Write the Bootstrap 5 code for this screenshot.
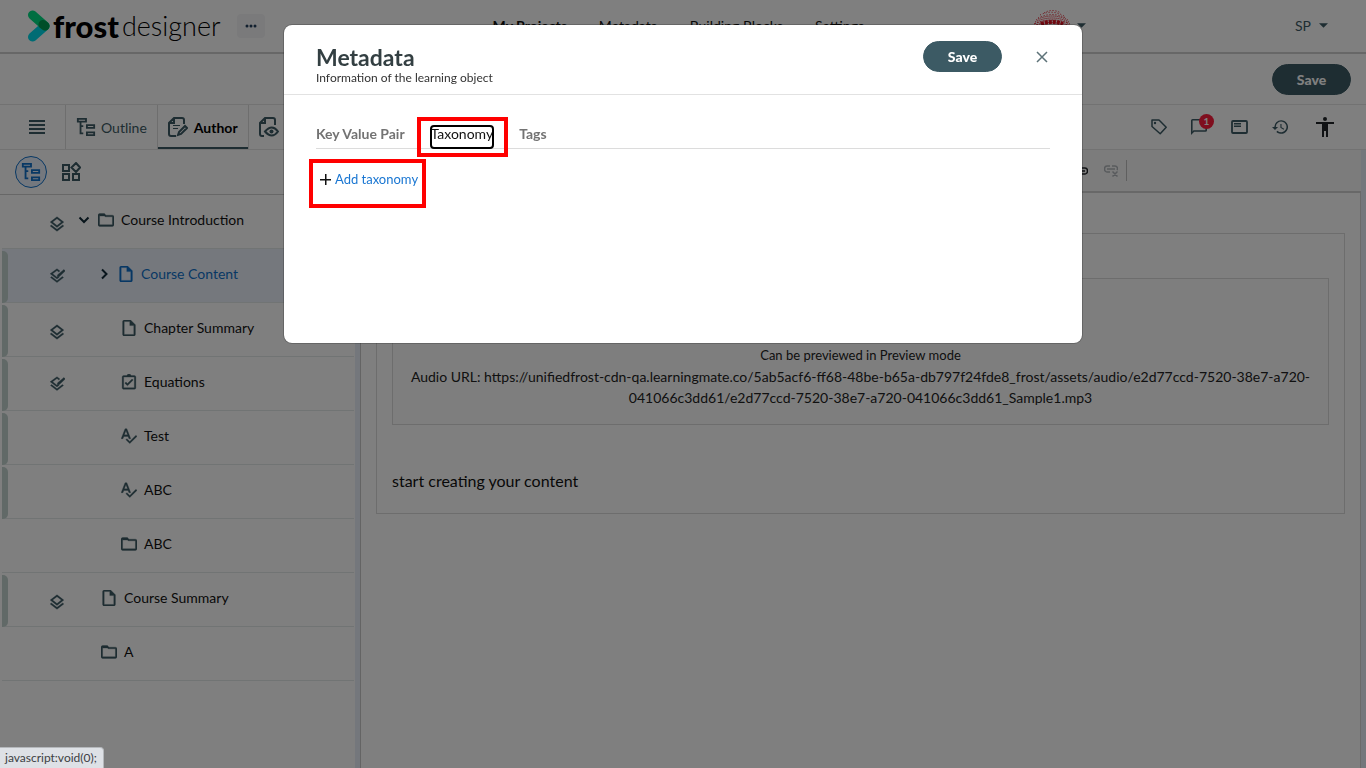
<!DOCTYPE html>
<html lang="en">
<head>
<meta charset="utf-8">
<meta name="viewport" content="width=device-width, initial-scale=1">
<title>Frost Designer - Metadata</title>
<link rel="stylesheet" href="https://cdn.jsdelivr.net/npm/bootstrap@5.3.0/dist/css/bootstrap.min.css">
<style>
  :root { --teal: #3c5a64; --line: #e4e4e4; --blue: #1070c9; }
  body { font-family: Lato, "Open Sans", sans-serif; font-size: 14px; line-height: 21px; color: #111; overflow: hidden; }
  svg { display: block; fill: currentColor; flex: none; }
  a { text-decoration: none; color: inherit; }
  .i16 { width: 16px; height: 16px; }
  .i20 { width: 20px; height: 20px; } .i24 { width: 24px; height: 24px; }
  .plain-btn { border: 0; background: none; padding: 0; color: var(--teal); }
  .shell { min-height: 100vh; }
  .top-bar { height: 54px; border-bottom: 2px solid #cfcfcf; padding: 0 38px 1px 28px; }
  .brand { color: #000; line-height: 36px; white-space: nowrap; gap: 3px; }
  .brand-bold { font-weight: 900; font-size: 31px; }
  .brand-light { font-weight: 300; font-size: 27px; }
  .more-btn { width: 28px; height: 24px; background: #f4f4f6; border-radius: 4px; color: #24405e; margin-left: 16px; }
  .main-nav { gap: 32px; margin-left: 228px; }
  .account { margin-left: 209px; gap: 8px; }
  .action-bar { height: 51px; border-bottom: 1px solid var(--line); padding-right: 15px; }
  .save-btn { width: 79px; height: 31px; padding: 0; border-radius: 16px; font-size: 14px; font-weight: 900; line-height: 21px; --bs-btn-bg: #3c5a64; --bs-btn-border-color: #3c5a64; --bs-btn-color: #fff; --bs-btn-hover-bg: #2e4850; --bs-btn-hover-color: #fff; }
  .tab-bar { height: 45px; border-bottom: 1px solid var(--line); color: var(--teal); padding-right: 28px; }
  .menu-cell { width: 66px; border-right: 1px solid #dcdcdc; padding-left: 9px; }
  .mode-tab { padding: 0 10px; gap: 5px; border-right: 1px solid #dcdcdc; }
  .mode-tab.current { color: #000; font-weight: 700; gap: 6px; box-shadow: inset 0 -2px #3c5a64; }
  .mode-tab svg { color: var(--teal); }
  .count-badge { width: 15px; height: 15px; border-radius: 50%; background: #ff1c3c; color: #fff; font-size: 10px; line-height: 15px; left: 8px; top: -5px; text-align: center; font-weight: 700; }
  .side { width: 361px; border-right: 1px solid #c8c8c8; box-shadow: inset -5px 0 #e8eff8; flex: none; padding-right: 5px; }
  .side-tools { height: 45px; border-bottom: 1px solid #cfcfcf; padding-left: 15px; gap: 14px; }
  .round-btn { width: 32px; height: 32px; border: 1px solid var(--blue); border-radius: 50%; color: var(--blue); background: #e8f0fc; }
  .tree { margin: 0 1px 0 2px; padding: 0; list-style: none; }
  .tree svg { stroke: currentColor; stroke-width: .4px; }
  .tree-row { height: 54px; border-bottom: 1px solid #e2e9e9; padding-bottom: 4px; }
  .edge { width: 6px; height: 52px; border-radius: 0 5px 5px 0; margin-bottom: -6px; }
  .edge.on { background: #c3d3cf; }
  .state-slot { width: 16px; height: 16px; margin: 5px 13px 0 41px; color: var(--teal); }
  .state-base { margin-top: 9px; }
  .level-2 { padding-left: 20px; }
  .chev { width: 20px; color: #122b38; } .chev-none { width: 23px; }
  .node-icon { margin-right: 7px; color: var(--teal); }
  .tree-row.picked { background: #eaf0fb; color: var(--blue); }
  .tree-row.picked .node-icon { color: var(--blue); }
  .editor { box-shadow: inset -5px 0 #e8eff8; padding-right: 5px; min-width: 0; }
  .format-bar { height: 43px; background: #f8f8f8; border-bottom: 2px solid #d0d0d0; padding-right: 234px; }
  .paper { border-right: 1px solid #d4d4d4; padding: 40px 15px 0; }
  .block-outer { border: 1px solid #dadada; padding: 44px 15px 20px; }
  .block-audio { border: 1px solid #dadada; background: #fdfdfd; padding: 16px; color: #222; }
  .audio-icon { height: 50px; }
  .hint { font-size: 13px; }
  .lead-in { font-size: 16px; line-height: 24px; margin-top: 44px; }
  .modal-dialog { max-width: 800px; margin: 24px auto; }
  .modal-content { height: 320px; border-radius: 9px; border-color: rgba(0,0,0,.2); background-clip: padding-box; }
  .modal-header { height: 70px; padding: 6px 33px 0 32px; border-color: #e2e2e2; }
  .modal-title { font-size: 23px; line-height: 28px; font-weight: 700; color: #333f42; margin-top: 2px; }
  .sub-title { font-size: 12px; line-height: 14px; color: #333; }
  .close-btn { margin-left: 33px; color: #5d7278; }
  .modal-body { padding: 28px 32px 0; }
  .meta-tabs { height: 26px; gap: 26px; border-bottom: 1px solid #dcdcdc; color: #737373; font-weight: 700; }
  .focus-tab { color: #111; outline: 2px solid #000; outline-offset: -1px; border-radius: 3px; height: 22px; font-weight: 400; margin-top: 3px; line-height: 16px; }
  .add-row { margin: 20px 0 0 4px; gap: 4px; color: #111; }
  .add-row a { color: #1976d2; font-size: 13px; }
  .callout { border: 4px solid #f00; pointer-events: none; }
  .callout-tab { inset: -6px -15px -9px -14px; }
  .callout-add { inset: -10px -8px -18px -11px; }
  .status-tip { z-index: 2000; background: #dee1e6; color: #3c4043; font-size: 12px; line-height: 20px; padding: 0 6px 0 5px; border: solid #b5b8bc; border-width: 1px 1px 0 0; border-radius: 0 4px 0 0; }
</style>
</head>
<body>
<svg class="d-none" aria-hidden="true">
  <symbol id="layers" viewBox="2 1 20 21"><path d="M12 18.5l-7.4-5.7L3 14.1l9 7 9-7-1.6-1.3zM12 16l7.4-5.7L21 9l-9-7-9 7 1.6 1.3zm0-11.5L17.7 9 12 13.5 6.3 9z"/></symbol>
  <symbol id="layers-edit" viewBox="1 1 22 22"><path d="M12 18.5l-7.4-5.7L3 14.1l9 7 9-7-1.6-1.3zM12 2L2.500 9l9.500 7 3-2.200-1.500-1.200-1.500 1L6 9l6-4.500 2.500 1.900L16 5zM21.500 3l2 2-8.500 8h-2.500v-2.500z"/></symbol>
  <symbol id="folder" viewBox="2 3 20 18"><path d="M9.200 6l2 2H20v10H4V6h5.200M10 4H4a2 2 0 0 0-2 2v12c0 1.100.9 2 2 2h16a2 2 0 0 0 2-2V8a2 2 0 0 0-2-2h-8z"/><path d="M4 5h6l2 2H4z"/></symbol>
  <symbol id="file" viewBox="2 2 20 20"><path d="M14 2H6a2 2 0 0 0-2 2v16c0 1.100.9 2 2 2h12a2 2 0 0 0 2-2V8zM6 20V4h7v5h5v11z"/></symbol>
  <symbol id="task" viewBox="2 1 20 21"><path d="M19 3h-4.200a3 3 0 0 0-5.600 0H5a2 2 0 0 0-2 2v14c0 1.100.9 2 2 2h14a2 2 0 0 0 2-2V5a2 2 0 0 0-2-2zm0 16H5V5h14zM17.500 9l-1.500-1.500-6 6-2-2L6.500 13l3.500 3.500z"/></symbol>
  <symbol id="spell" viewBox="2 2 21 21"><path d="M12.400 16h2.400L9.700 3H7.300L2.200 16h2.400l1.100-3h5.600zM6.400 11l2.100-5.500 2.100 5.500zM21.600 11.600l-8.100 8.100L9.800 16l-1.400 1.400 5.100 5.100L23 13z"/></symbol>
  <symbol id="outline" viewBox="0 0 22 22"><path fill="none" stroke="currentColor" stroke-width="2" d="M2 2h9v3H2zM12 9h8v3h-8zM12 17h8v3h-8zM5 6v12h3M5 10h3"/></symbol>
  <symbol id="down" viewBox="0 0 12 12"><path fill="none" stroke="currentColor" stroke-width="2" d="M1.500 3.500L6 8l4.500-4.500"/></symbol>
  <symbol id="right" viewBox="0 0 12 12"><path fill="none" stroke="currentColor" stroke-width="2" d="M4 1.500L8.500 6 4 10.500"/></symbol>
  <symbol id="caret" viewBox="0 0 10 5"><path d="M0 0h10L5 5z"/></symbol>
</svg>

<div class="shell d-flex flex-column">
  <header class="top-bar d-flex align-items-center">
    <a href="#" class="brand d-flex align-items-center" aria-label="frost designer">
      <svg width="22" height="32" viewBox="0 0 22 32"><g fill="none" stroke-width="9" stroke-linecap="round"><path stroke="#00d8e8" d="M4.500 27L17 16"/><path stroke="#00dc82" d="M4.500 5L17 16"/><path stroke="#009c50" d="M15 14.500L17 16"/></g></svg>
      <span class="brand-bold">frost</span><span class="brand-light">designer</span>
    </a>
    <button class="plain-btn more-btn d-flex align-items-center justify-content-center" aria-label="More"><svg width="12" height="4"><circle cx="2" cy="2" r="1.500"/><circle cx="6" cy="2" r="1.500"/><circle cx="10" cy="2" r="1.500"/></svg></button>
    <nav class="main-nav d-flex text-nowrap">
      <a href="#" class="fw-bold">My Projects</a><a href="#">Metadata</a><a href="#">Building Blocks</a><a href="#">Settings</a>
    </nav>
    <button class="plain-btn d-flex align-items-center gap-1 ms-auto" aria-label="Organisation">
      <svg width="42" height="32" viewBox="0 0 42 32"><g fill="none" stroke="#e01020"><path stroke-width="1" stroke-dasharray="1 2" d="M13 3q8-5 17 0M9 5q12-6 24 1M7 8q14-7 28 0"/><path stroke-width="1" stroke-dasharray="1 1" d="M5 10q16-8 32 0M4 12q17-8 34 0"/><path stroke-width="1" stroke-dasharray="2 1" d="M3 14q18-8 36 0M2 16q19-7 38 0"/><path stroke-width="4" stroke-dasharray="3 1" d="M10 14q11-4 22 0"/><path stroke-width="2" stroke-dasharray="1 1" d="M3 20h36M6 24h30"/></g></svg>
      <svg width="9" height="5"><use href="#caret"/></svg>
    </button>
    <button class="plain-btn account d-flex align-items-center"><span>SP</span><svg width="9" height="5"><use href="#caret"/></svg></button>
  </header>

  <div class="action-bar d-flex align-items-center justify-content-end"><button class="btn save-btn">Save</button></div>

  <div class="tab-bar d-flex">
    <button class="plain-btn menu-cell d-flex align-items-center justify-content-center" aria-label="Menu"><svg width="16" height="14" viewBox="0 0 16 14"><path d="M0 0h16v2H0zM0 4h16v2H0zM0 8h16v2H0zM0 12h16v2H0z"/></svg></button>
    <a href="#" class="mode-tab d-flex align-items-center"><svg class="i20"><use href="#outline"/></svg>Outline</a>
    <a href="#" class="mode-tab current d-flex align-items-center"><svg class="i20" viewBox="0 0 20 20"><g fill="none" stroke="currentColor" stroke-width="2"><path d="M8 19H3q-2 0-2-2V6l5-5h8q2 0 2 2v4M1 6h5V1M10 18l1-3 6-6 2 2-6 6z"/><path stroke-width="1" d="M5 8.500h7M5 11.500h5"/></g></svg>Author</a>
    <a href="#" class="mode-tab d-flex align-items-center" aria-label="Preview"><svg class="i20" viewBox="0 0 20 20"><g fill="none" stroke="currentColor" stroke-width="2"><path d="M5 19H3q-2 0-2-2V6l5-5h8q2 0 2 2v5M1 6h5V1"/><path d="M6 14.500q7-8 13 0-6 8-13 0z"/></g><circle cx="12.500" cy="14.500" r="2"/></svg></a>
    <div class="d-flex align-items-center ms-auto">
      <button class="plain-btn me-4" aria-label="Tags"><svg class="i16" viewBox="0 0 16 16"><path fill="none" stroke="currentColor" stroke-width="1.500" stroke-linejoin="round" d="M1 1h7l7.200 7.200-6 6.500L1 7.500z"/><circle cx="4" cy="4" r="1.200"/></svg></button>
      <button class="plain-btn position-relative me-4" aria-label="Comments"><svg class="i16" viewBox="2 2 20 20"><path d="M20 2H4a2 2 0 0 0-2 2v18l4-4h14a2 2 0 0 0 2-2V4a2 2 0 0 0-2-2zm0 14H5l-1 2V4h16z"/></svg><span class="count-badge position-absolute">1</span></button>
      <button class="plain-btn me-4" aria-label="Notes"><svg width="17" height="14" viewBox="0 0 17 14"><rect x="1" y="1" width="15" height="12" rx="1" fill="none" stroke="currentColor" stroke-width="1.800"/><path d="M3 3h7v1.500H3zM3 5.500h7V7H3z"/></svg></button>
      <button class="plain-btn" aria-label="History"><svg class="i16" viewBox="1 3 21 18"><path d="M13 3a9 9 0 0 0-9 9H1l3.900 3.900L9 12H6a7 7 0 1 1 2.100 4.900l-1.400 1.500A9 9 0 1 0 13 3zm-1 5v5l4.300 2.500.7-1.200-3.500-2.100V8z"/></svg></button>
      <button class="plain-btn ms-4" aria-label="Accessibility"><svg width="26" height="20" viewBox="2 2 20 20" class="text-dark"><path d="M12 2a2 2 0 1 1 0 4 2 2 0 0 1 0-4zm9 7h-6v13h-2v-6h-2v6H9V9H3V7h18z"/></svg></button>
    </div>
  </div>

  <div class="d-flex flex-grow-1">
    <aside class="side">
      <div class="side-tools d-flex align-items-center">
        <button class="plain-btn round-btn d-flex align-items-center justify-content-center" aria-label="Tree view"><svg class="i20"><use href="#outline"/></svg></button>
        <button class="plain-btn" aria-label="Widgets"><svg class="i20" viewBox="0 0 20 20"><path fill="none" stroke="currentColor" stroke-width="2" d="M2 3h6v6H2zM2 12h6v6H2zM12 12h6v6h-6zM15 1l4 4.500-4 4.500-4.500-4.500z"/></svg></button>
      </div>
      <ul class="tree">
        <li class="tree-row d-flex align-items-center"><span class="edge"></span><span class="state-slot state-base"><svg class="i16"><use href="#layers"/></svg></span><span class="chev"><svg width="12" height="12"><use href="#down"/></svg></span><svg class="i16 node-icon"><use href="#folder"/></svg><a href="#">Course Introduction</a></li>
        <li class="tree-row picked d-flex align-items-center"><span class="edge on"></span><span class="state-slot"><svg class="i16"><use href="#layers-edit"/></svg></span><span class="level-2 d-flex align-items-center"><span class="chev"><svg width="12" height="12"><use href="#right"/></svg></span><svg class="i16 node-icon"><use href="#file"/></svg><a href="#">Course Content</a></span></li>
        <li class="tree-row d-flex align-items-center"><span class="edge on"></span><span class="state-slot state-base"><svg class="i16"><use href="#layers"/></svg></span><span class="level-2 d-flex align-items-center"><span class="chev-none"></span><svg class="i16 node-icon"><use href="#file"/></svg><a href="#">Chapter Summary</a></span></li>
        <li class="tree-row d-flex align-items-center"><span class="edge on"></span><span class="state-slot"><svg class="i16"><use href="#layers-edit"/></svg></span><span class="level-2 d-flex align-items-center"><span class="chev-none"></span><svg class="i16 node-icon"><use href="#task"/></svg><a href="#">Equations</a></span></li>
        <li class="tree-row d-flex align-items-center"><span class="edge on"></span><span class="state-slot"></span><span class="level-2 d-flex align-items-center"><span class="chev-none"></span><svg class="i16 node-icon"><use href="#spell"/></svg><a href="#">Test</a></span></li>
        <li class="tree-row d-flex align-items-center"><span class="edge on"></span><span class="state-slot"></span><span class="level-2 d-flex align-items-center"><span class="chev-none"></span><svg class="i16 node-icon"><use href="#spell"/></svg><a href="#">ABC</a></span></li>
        <li class="tree-row d-flex align-items-center"><span class="edge"></span><span class="state-slot"></span><span class="level-2 d-flex align-items-center"><span class="chev-none"></span><svg class="i16 node-icon"><use href="#folder"/></svg><a href="#">ABC</a></span></li>
        <li class="tree-row d-flex align-items-center"><span class="edge on"></span><span class="state-slot state-base"><svg class="i16"><use href="#layers"/></svg></span><span class="chev-none"></span><svg class="i16 node-icon"><use href="#file"/></svg><a href="#">Course Summary</a></li>
        <li class="tree-row d-flex align-items-center"><span class="edge"></span><span class="state-slot"></span><span class="chev-none"></span><svg class="i16 node-icon"><use href="#folder"/></svg><a href="#">A</a></li>
      </ul>
    </aside>

    <main class="editor flex-grow-1 d-flex flex-column">
      <div class="format-bar d-flex align-items-center justify-content-end">
        <button class="plain-btn text-dark me-3" aria-label="Link"><svg width="14" height="8" viewBox="0 0 14 8"><path fill="none" stroke="currentColor" stroke-width="1.500" d="M6 1H3a2.500 3 0 0 0 0 6h3M8 1h3a2.500 3 0 0 1 0 6H8M3 4h8"/></svg></button>
        <button class="plain-btn text-secondary opacity-50 me-1" aria-label="Unlink"><svg width="14" height="12" viewBox="0 0 14 12"><path fill="none" stroke="currentColor" stroke-width="1.500" d="M6 1H3a2.500 3 0 0 0 0 6h3M8 1h3a2.500 2.500 0 0 1 2 4M3 4h8M8.500 6.500l5 5M13.500 6.500l-5 5"/></svg></button>
        <span class="vr h-50 align-self-center ms-1"></span>
      </div>
      <div class="paper flex-grow-1">
        <section class="block-outer">
          <div class="block-audio text-center">
            <div class="audio-icon d-flex align-items-center justify-content-center"><svg class="i24" viewBox="0 0 24 24"><path d="M3 9v6h4l5 5V4L7 9z"/></svg></div>
            <div class="hint">Can be previewed in Preview mode</div>
            <div>Audio URL: https://unifiedfrost-cdn-qa.learningmate.co/5ab5acf6-ff68-48be-b65a-db797f24fde8_frost/assets/audio/e2d77ccd-7520-38e7-a720-041066c3dd61/e2d77ccd-7520-38e7-a720-041066c3dd61_Sample1.mp3</div>
          </div>
          <p class="lead-in mb-0">start creating your content</p>
        </section>
      </div>
    </main>
  </div>
</div>

<div class="modal-backdrop show"></div>
<div class="modal show d-block" tabindex="-1" role="dialog" aria-labelledby="metaTitle">
  <div class="modal-dialog">
    <div class="modal-content">
      <div class="modal-header">
        <div><h1 class="modal-title mb-0" id="metaTitle">Metadata</h1><div class="sub-title">Information of the learning object</div></div>
        <div class="d-flex align-items-center mb-2 pb-1">
          <button class="btn save-btn">Save</button>
          <button class="plain-btn close-btn" aria-label="Close"><svg width="14" height="14" viewBox="0 0 14 14"><path fill="none" stroke="currentColor" stroke-width="1.500" d="M2 2l10 10M12 2L2 12"/></svg></button>
        </div>
      </div>
      <div class="modal-body">
        <nav class="meta-tabs d-flex">
          <a href="#">Key Value Pair</a>
          <span class="position-relative d-flex"><a href="#" class="focus-tab">Taxonomy</a><span class="callout callout-tab position-absolute"></span></span>
          <a href="#">Tags</a>
        </nav>
        <div class="add-row position-relative d-inline-flex align-items-center">
          <svg width="11" height="11" viewBox="0 0 11 11"><path d="M5 0h1.500v5H11v1.500H6.500V11H5V6.500H0V5h5z"/></svg><a href="#">Add taxonomy</a><span class="callout callout-add position-absolute"></span>
        </div>
      </div>
    </div>
  </div>
</div>
<div class="status-tip position-fixed bottom-0 start-0">javascript:void(0);</div>
<script src="https://cdn.jsdelivr.net/npm/bootstrap@5.3.0/dist/js/bootstrap.bundle.min.js"></script>
</body>
</html>
